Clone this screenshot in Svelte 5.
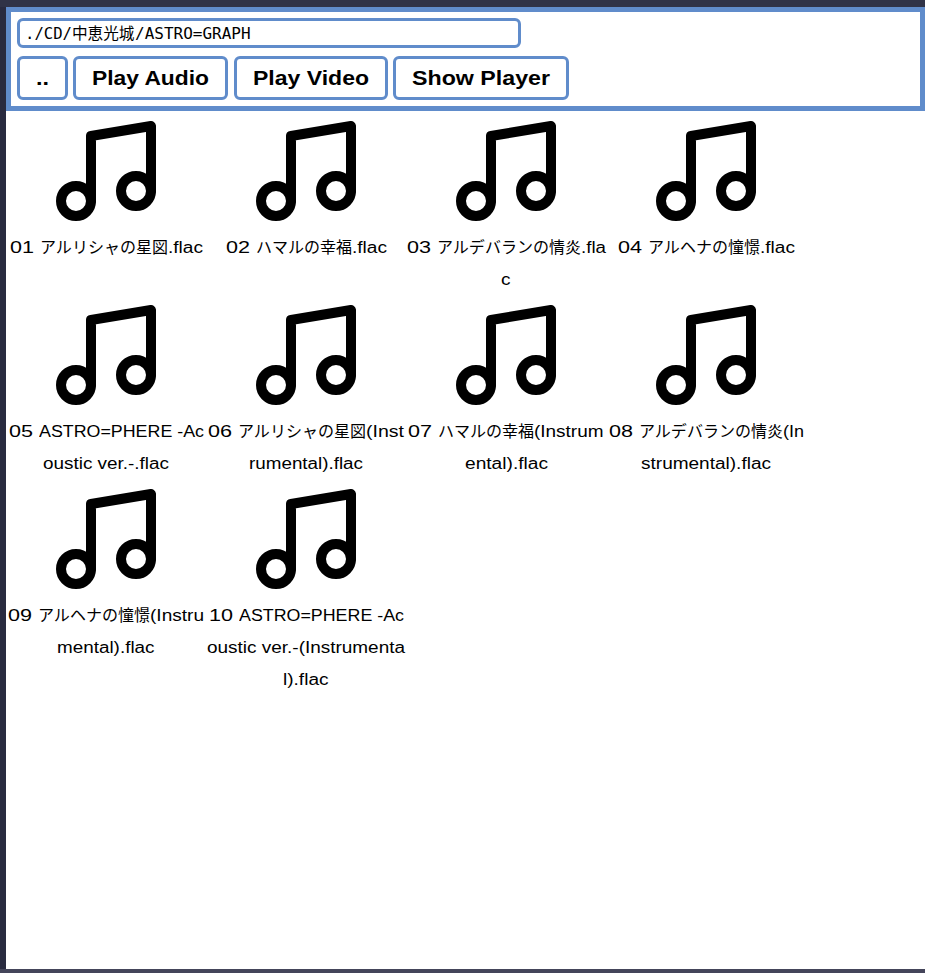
<script>
  // Each file name is a list of lines; each line is a list of [text, advance width] runs.
  const files = [
    [[['01 ', 30], ['アルリシャの星図', 128], ['.flac', 35]]],
    [[['02 ', 30], ['ハマルの幸福', 96], ['.flac', 35]]],
    [[['03 ', 30], ['アルデバランの情炎', 144], ['.fla', 25]], [['c', 9.5]]],
    [[['04 ', 30], ['アルヘナの憧憬', 112], ['.flac', 35]]],
    [[['05 ', 30], ['ASTRO=PHERE -Ac', 165]], [['oustic ver.-.flac', 126]]],
    [[['06 ', 30], ['アルリシャの星図', 128], ['(Inst', 38]], [['rumental).flac', 114]]],
    [[['07 ', 30], ['ハマルの幸福', 96], ['(Instrum', 69.5]], [['ental).flac', 83]]],
    [[['08 ', 30], ['アルデバランの情炎', 144], ['(In', 21]], [['strumental).flac', 130]]],
    [[['09 ', 30], ['アルヘナの憧憬', 112], ['(Instru', 54]], [['mental).flac', 97.5]]],
    [[['10 ', 30], ['ASTRO=PHERE -Ac', 165]], [['oustic ver.-(Instrumenta', 198]], [['l).flac', 45.5]]],
  ];
  const buttons = [['..', 13], ['Play Audio', 117], ['Play Video', 116], ['Show Player', 138]];
  const path = [['./CD/', 47], ['中恵光城', 62.5], ['/ASTRO=GRAPH', 115.5]];

  // Widens a run's letters so that they fill its advance width.
  function fit(node, width) {
    const natural = node.getBoundingClientRect().width;
    node.style.transform = `scaleX(${width / natural})`;
    node.style.marginRight = `${width - natural}px`;
  }
</script>

<div class="desktop">
  <main>
    <header>
      <div class="path">{#each path as [text, width]}<span class="run" use:fit={width}>{text}</span>{/each}</div>
      <nav>
        {#each buttons as [text, width]}
          <button style:width="{width + 38}px"><span class="run" use:fit={width}>{text}</span></button>
        {/each}
      </nav>
    </header>
    <section>
      {#each files as lines}
        <div class="file">
          <svg width="100" height="100" viewBox="0 0 100 100" fill="none" stroke="#000" stroke-width="10" stroke-linejoin="round" stroke-linecap="round">
            <circle cx="20" cy="80" r="15" />
            <circle cx="80" cy="70" r="15" />
            <path d="M35 80V15L95 5V70" />
          </svg>
          {#each lines as runs}
            <div class="line">{#each runs as [text, width]}<span class="run" use:fit={width}>{text}</span>{/each}</div>
          {/each}
        </div>
      {/each}
    </section>
  </main>
</div>

<style>
  .desktop {
    box-sizing: border-box;
    width: 925px;
    height: 973px;
    padding: 7px 0 4px 6px;
    background: linear-gradient(#303347 0 7px, #292b40 7px 969px, #44455a 969px);
    overflow: hidden;
  }
  main {
    height: 962px;
    background: #fff;
    color: #000;
    font: 16px/32px "Liberation Sans", "Noto Sans CJK JP", sans-serif;
  }
  header {
    box-sizing: border-box;
    height: 104px;
    border: 5px solid #608ccb;
    padding: 6px;
  }
  .path {
    box-sizing: border-box;
    width: 504px;
    height: 30px;
    border: 3px solid #608ccb;
    border-radius: 6px;
    padding: 1px 0 0 5px;
    display: flex;
    font: 16px/24px "DejaVu Sans Mono", "Noto Sans CJK JP", monospace;
  }
  nav {
    display: flex;
    gap: 5.33px;
    margin-top: 8px;
  }
  button {
    box-sizing: border-box;
    height: 44px;
    margin: 0;
    padding: 0 0 0 16px;
    border: 3px solid #608ccb;
    border-radius: 6px;
    background: #fff;
    color: #000;
    text-align: left;
    white-space: nowrap;
    font: bold 20px/38px "Liberation Sans", sans-serif;
  }
  section {
    display: flex;
    flex-wrap: wrap;
    align-content: flex-start;
    width: 800px;
  }
  .file {
    width: 200px;
    margin-bottom: -1px;
    display: flex;
    flex-direction: column;
    align-items: center;
  }
  svg {
    margin: 10px 0 11px;
    flex: none;
  }
  .line {
    display: flex;
    height: 32px;
  }
  .run {
    display: inline-block;
    flex: none;
    white-space: pre;
    transform-origin: left;
  }
</style>
